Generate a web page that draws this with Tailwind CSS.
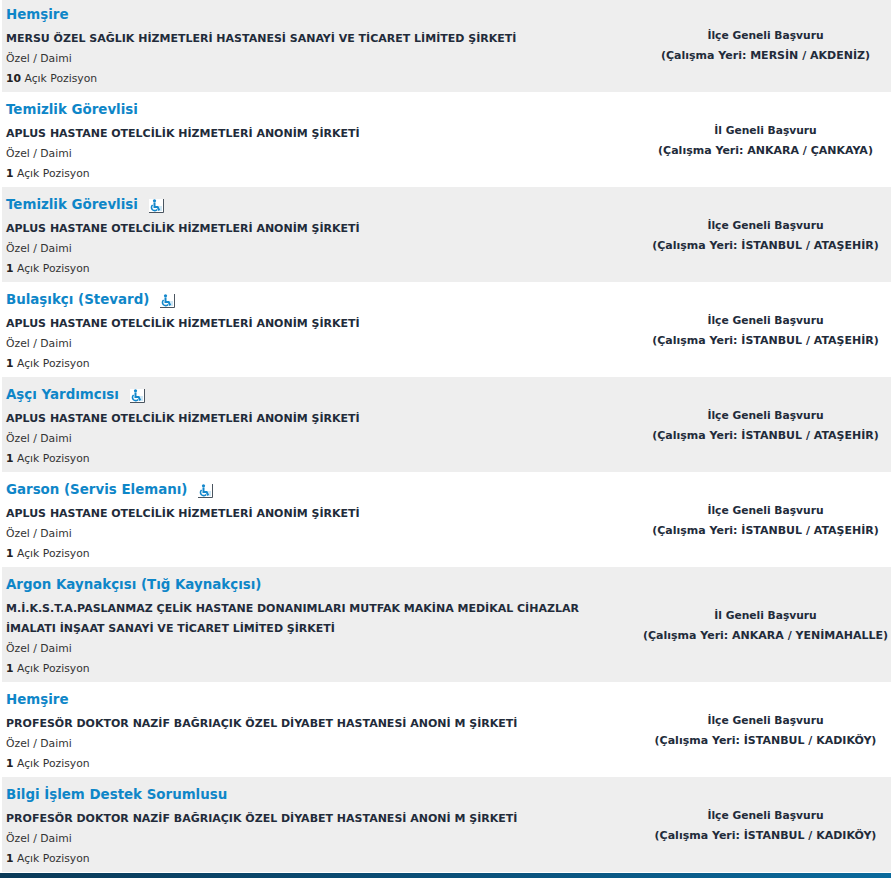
<!DOCTYPE html>
<html lang="tr">
<head>
<meta charset="UTF-8">
<title>İş İlanları</title>
<script src="https://cdn.jsdelivr.net/npm/@tailwindcss/browser@4"></script>
</head>
<body class="bg-white overflow-hidden h-[878px] font-['DejaVu_Sans',sans-serif]">
  <div id="liste" class="mt-[-3px] pl-[2px]"></div>
  <div class="mt-[1px] h-[6px] bg-gradient-to-r from-[#0a3a58] via-[#0a4f78] to-[#0a6a9c]"></div>

  <template id="engelli">
    <svg class="ml-[11px] mt-[2px] w-[16px] h-[14px]" viewBox="0 0 16 14">
      <rect width="15" height="13" fill="#fff"/>
      <path d="M14.5 0v13.5H0" fill="none" stroke="#4a5560"/>
      <path d="M10 7h3v5h-2z" fill="#cfe8f6"/>
      <circle cx="5.5" cy="1.8" r="1.6" fill="#1488cc"/>
      <path d="M5.5 3.5v4.6h3.2l1.6 3.4" fill="none" stroke="#1488cc" stroke-width="2"/>
      <path d="M3.6 6a3.2 3.2 0 1 0 4.6 4.4" fill="none" stroke="#1488cc" stroke-width="1.6"/>
    </svg>
  </template>

  <script>
    const aplus = "APLUS HASTANE OTELCİLİK HİZMETLERİ ANONİM ŞİRKETİ";
    const diyabet = "PROFESÖR DOKTOR NAZİF BAĞRIAÇIK ÖZEL DİYABET HASTANESİ ANONİ M ŞİRKETİ";
    const ilanlar = [
      { baslik: "Hemşire", firma: ["MERSU ÖZEL SAĞLIK HİZMETLERİ HASTANESİ SANAYİ VE TİCARET LİMİTED ŞİRKETİ"], adet: 10, basvuru: "İlçe Geneli Başvuru", yer: "MERSİN / AKDENİZ" },
      { baslik: "Temizlik Görevlisi", firma: [aplus], adet: 1, basvuru: "İl Geneli Başvuru", yer: "ANKARA / ÇANKAYA" },
      { baslik: "Temizlik Görevlisi", engelli: true, firma: [aplus], adet: 1, basvuru: "İlçe Geneli Başvuru", yer: "İSTANBUL / ATAŞEHİR" },
      { baslik: "Bulaşıkçı (Stevard)", engelli: true, firma: [aplus], adet: 1, basvuru: "İlçe Geneli Başvuru", yer: "İSTANBUL / ATAŞEHİR" },
      { baslik: "Aşçı Yardımcısı", engelli: true, firma: [aplus], adet: 1, basvuru: "İlçe Geneli Başvuru", yer: "İSTANBUL / ATAŞEHİR" },
      { baslik: "Garson (Servis Elemanı)", engelli: true, firma: [aplus], adet: 1, basvuru: "İlçe Geneli Başvuru", yer: "İSTANBUL / ATAŞEHİR" },
      { baslik: "Argon Kaynakçısı (Tığ Kaynakçısı)", firma: ["M.İ.K.S.T.A.PASLANMAZ ÇELİK HASTANE DONANIMLARI MUTFAK MAKİNA MEDİKAL CİHAZLAR", "İMALATI İNŞAAT SANAYİ VE TİCARET LİMİTED ŞİRKETİ"], adet: 1, basvuru: "İl Geneli Başvuru", yer: "ANKARA / YENİMAHALLE" },
      { baslik: "Hemşire", firma: [diyabet], adet: 1, basvuru: "İlçe Geneli Başvuru", yer: "İSTANBUL / KADIKÖY" },
      { baslik: "Bilgi İşlem Destek Sorumlusu", firma: [diyabet], adet: 1, basvuru: "İlçe Geneli Başvuru", yer: "İSTANBUL / KADIKÖY" },
    ];

    const liste = document.getElementById("liste");
    const ikon = document.getElementById("engelli");

    ilanlar.forEach((ilan, i) => {
      const satir = document.createElement("div");
      satir.className = "flex items-stretch";
      if (i % 2 === 0) satir.classList.add("bg-[#eeeeee]");

      const sol = document.createElement("div");
      sol.className = "w-[638px] pl-[4px] pt-[8px] pb-[3px]";

      const baslik = document.createElement("div");
      baslik.className = "flex items-center h-[20px] mb-[4px] text-[13.4px] font-bold text-[#0e86c8]";
      baslik.textContent = ilan.baslik;
      if (ilan.engelli) baslik.appendChild(ikon.content.cloneNode(true));
      sol.appendChild(baslik);

      ilan.firma.forEach(f => {
        const firma = document.createElement("div");
        firma.className = "h-[20px] leading-[20px] text-[11px] font-bold text-[#222b3a] whitespace-nowrap";
        firma.textContent = f;
        sol.appendChild(firma);
      });

      const tur = document.createElement("div");
      tur.className = "h-[20px] leading-[20px] text-[10.8px] text-[#333333]";
      tur.textContent = "Özel / Daimi";
      sol.appendChild(tur);

      const adet = document.createElement("div");
      adet.className = "h-[20px] leading-[20px] text-[10.8px] text-[#333333]";
      adet.innerHTML = `<b class="text-[#222222]">${ilan.adet}</b> Açık Pozisyon`;
      sol.appendChild(adet);

      const sag = document.createElement("div");
      sag.className = "flex-1 flex flex-col justify-center items-center pt-[2px] text-[11px] font-bold text-[#222b3a] whitespace-nowrap";

      const basvuru = document.createElement("div");
      basvuru.className = "h-[20px] leading-[20px] text-[10.7px]";
      basvuru.textContent = ilan.basvuru;
      sag.appendChild(basvuru);

      const yer = document.createElement("div");
      yer.className = "h-[20px] leading-[20px]";
      yer.textContent = `(Çalışma Yeri: ${ilan.yer})`;
      sag.appendChild(yer);

      satir.appendChild(sol);
      satir.appendChild(sag);
      liste.appendChild(satir);
    });
  </script>
</body>
</html>
